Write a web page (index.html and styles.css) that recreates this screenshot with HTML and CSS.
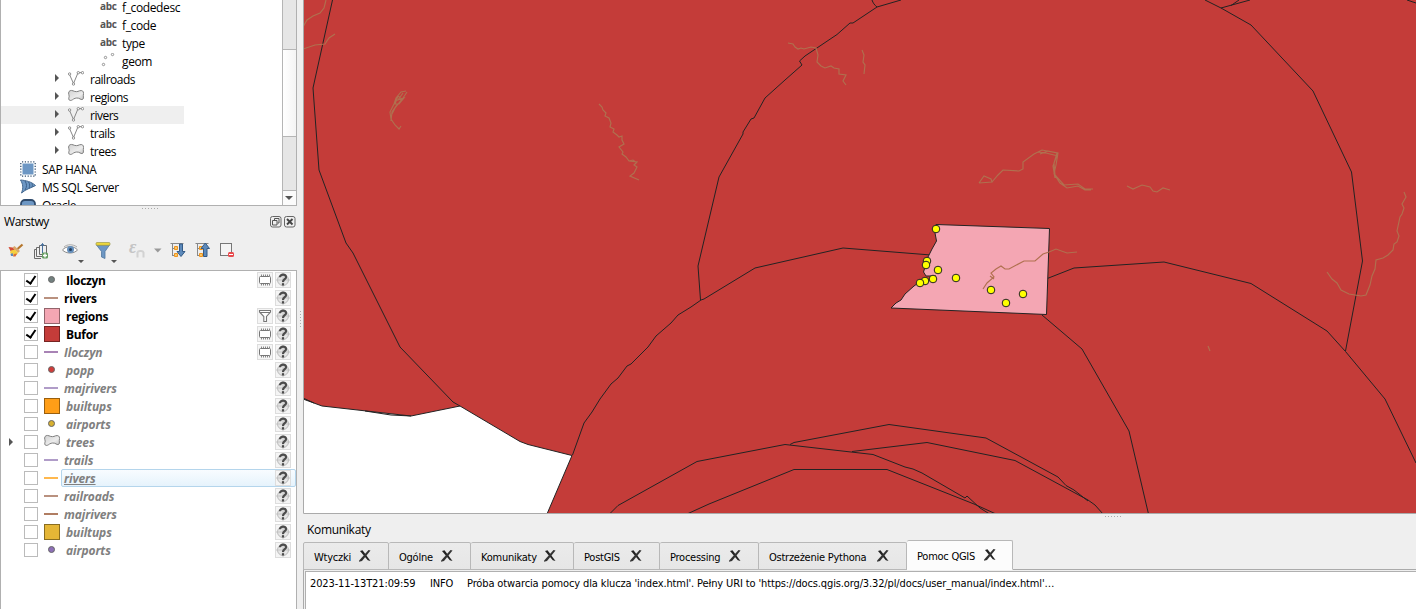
FILE: index.html
```html
<!DOCTYPE html>
<html lang="pl">
<head>
<meta charset="utf-8">
<title>QGIS</title>
<link rel="stylesheet" href="styles.css">
</head>
<body>
<svg class="defs" width="0" height="0">
  <defs>
    <linearGradient id="gray" x1="0" y1="0" x2="1" y2="1"><stop offset="0" stop-color="#d2d2d2"/><stop offset=".6" stop-color="#ececec"/><stop offset="1" stop-color="#c0c0c0"/></linearGradient>
    <symbol id="line" viewBox="0 0 16 16"><path d="M1.500 3.500 5.500 12.500 10 1.800 14.500 1.500" fill="none" stroke="#888"/><g fill="#fff" stroke="#777" stroke-width=".8"><circle cx="1.600" cy="3" r="1.200"/><circle cx="5.500" cy="13" r="1.200"/><circle cx="10.300" cy="1.700" r="1.200"/><circle cx="14.500" cy="1.700" r="1.200"/></g></symbol>
    <symbol id="poly" viewBox="0 0 16 16"><path d="M.6 4C.8 1.500 3 1 5 1.800 7.500 3 9.500 2.800 11.500 1.800 14 1 15.700 2 15.500 4.500 15.300 6 15.200 7.500 15.400 9 15.200 10.800 13.500 11 12 9.900 10 8.600 7.500 8.800 5.500 10 4 11.200 2.500 12 1.200 11 .3 9.800 1 8.500 1.200 7.200 1.200 6 .5 5.500.6 4Z" fill="url(#gray)" stroke="#808080"/></symbol>
    <symbol id="pts" viewBox="0 0 16 16"><g fill="#fff" stroke="#888" stroke-width=".9"><circle cx="3.500" cy="11.500" r="1.200"/><circle cx="5.500" cy="4.500" r="1.200"/><circle cx="12.500" cy="1.500" r="1.200"/></g></symbol>
    <symbol id="help" viewBox="0 0 16 16"><circle cx="8" cy="8" r="5.500" fill="#e6e6e6" stroke="#bbb"/><path d="M1 8H15M8 1V15" stroke="#c4c4c4"/><path d="M5 5.300C5 1.700 11 1.900 11 5.200 11 7.300 8 7.200 8 10" fill="none" stroke="#4c4c4c" stroke-width="2.200"/><rect x="6.900" y="11.200" width="2.200" height="2.300" fill="#4c4c4c"/></symbol>
    <symbol id="chip" viewBox="0 0 16 16"><rect x="2.500" y="4.500" width="11" height="7" rx="1" fill="#fff" stroke="#777"/><path d="M4.500 2.500V4M6.500 2.500V4M8.500 2.500V4M10.500 2.500V4M12.500 2.500V4M4.500 12V13.500M6.500 12V13.500M8.500 12V13.500M10.500 12V13.500M12.500 12V13.500" stroke="#888"/></symbol>
    <symbol id="filt" viewBox="0 0 16 16"><path d="M2.500 2.500H13.500V4L9.500 8.500V13.500H6.800V8.500L2.500 4ZM3 4.500H13" fill="#fff" stroke="#777" stroke-width="1.100"/></symbol>
    <symbol id="x" viewBox="0 0 14 14"><path d="M2 2 4.500 1.300 12.500 12 9.800 11.200Z" fill="#222"/><path d="M10.500 1 12.500 1.500 4 12 1 12.800 1.200 11.500Z" fill="#333"/></symbol>
  </defs>
</svg>
<div class="app">
  <aside class="side">
    <section class="browser">
      <div class="tree">
        <div class="node field"><b class="abc">abc</b><span>f_codedesc</span></div>
        <div class="node field"><b class="abc">abc</b><span>f_code</span></div>
        <div class="node field"><b class="abc">abc</b><span>type</span></div>
        <div class="node field"><svg class="ic"><use href="#pts"/></svg><span>geom</span></div>
        <div class="node table"><i class="arrow"></i><svg class="ic"><use href="#line"/></svg><span>railroads</span></div>
        <div class="node table"><i class="arrow"></i><svg class="ic"><use href="#poly"/></svg><span>regions</span></div>
        <div class="node table hover"><i class="arrow"></i><svg class="ic"><use href="#line"/></svg><span>rivers</span></div>
        <div class="node table"><i class="arrow"></i><svg class="ic"><use href="#line"/></svg><span>trails</span></div>
        <div class="node table"><i class="arrow"></i><svg class="ic"><use href="#poly"/></svg><span>trees</span></div>
        <div class="node root"><svg class="ic" viewBox="0 0 16 16"><rect x="2.500" y="2.500" width="11" height="11" fill="#6d97c4"/><path d="M2 .8H15M2 15.200H15M.8 2V15M15.200 2V15" fill="none" stroke="#34506e" stroke-width="1.300" stroke-dasharray="1.200 1.600"/></svg><span>SAP HANA</span></div>
        <div class="node root"><svg class="ic" viewBox="0 0 16 16"><path d="M.5 1C6 1.500 11 2.500 15.500 6.500 11 9 6 10 1.500 14 3.500 9 3 5 .5 1Z" fill="#6d97c4" stroke="#44688f"/><path d="M5 2C7 5 7 8 5 11M8.500 3C10 5 10 7 9 9.500M12 4.500C12.500 6 12.500 7 12 8" fill="none" stroke="#3b5f88"/></svg><span>MS SQL Server</span></div>
        <div class="node root"><svg class="ic" viewBox="0 0 16 16"><rect x="1" y="3" width="14" height="11" rx="4" fill="#6d97c4" stroke="#2e4a6c" stroke-width="1.800"/></svg><span>Oracle</span></div>
      </div>
      <div class="scroll"><div class="thumb"></div><div class="down"><i></i></div></div>
    </section>
    <div class="grip"></div>
    <header class="title"><span>Warstwy</span>
      <svg width="12" height="12" viewBox="0 0 12 12"><rect x=".5" y=".5" width="10.500" height="10.500" rx="2" fill="none" stroke="#666"/><path d="M4.500 4.500V2.500H9V7H7.500M2.500 4.500H7V9H2.500Z" fill="none" stroke="#555"/></svg>
      <svg width="12" height="12" viewBox="0 0 12 12"><rect x=".5" y=".5" width="10.500" height="10.500" rx="2" fill="none" stroke="#666"/><path d="M3 3 8.500 8.500M8.500 3 3 8.500" stroke="#444" stroke-width="1.900"/></svg>
    </header>
    <svg class="tools" width="297" height="36" viewBox="0 234 297 36">
      <path d="M17.500 249 22.500 244.500" stroke="#b5762c" stroke-width="2.200"/><path d="M14.500 246 20 251 18 253 12.500 247.500Z" fill="#d9a86a"/><path d="M8.500 247 12.500 247.500 15 250 11 252Z" fill="#d44b35"/><path d="M11 250.500 15 249.500 18 253 16.500 255 13.500 255.500 10 253Z" fill="#f4cf3e"/><path d="M10.500 254 12.500 253 13.500 256H11Z" fill="#5b87bd"/><path d="M14 254 17 253.500 15.500 256.500 13 256.500Z" fill="#dd6a38"/>
      <g fill="none" stroke="#6a6a6a"><path d="M39.500 245.500H46.500V254.500H39.500ZM39 247.500H36.500V256.500H43M36 249.500H34.500V258.500H41"/><path d="M42.500 253V243.500M40.500 246 42.500 243.500 44.500 246" stroke="#456f9d"/></g><rect x="42" y="252.500" width="6" height="6" rx="1.500" fill="#619a5d"/><path d="M43 255.500H47M45 253.500V257.500" stroke="#fff" stroke-width="1.400"/>
      <path d="M62.500 250C66 245.500 74 245.500 77.500 250 74 254 66 254 62.500 250Z" fill="#fff" stroke="#8a8a8a"/><path d="M64 247C67 244 73 244 77 247" fill="none" stroke="#aaa"/><circle cx="70.500" cy="249.500" r="3.500" fill="#638ebc"/><circle cx="70.500" cy="249.500" r="1.500" fill="#263f5d"/>
      <path d="M96.500 245H109.500L105 251.500V258.500L101.500 257V251.500Z" fill="#6d97c4" stroke="#50779f" stroke-width=".8"/><rect x="96" y="242.500" width="14" height="2.800" rx="1" fill="#eed83b" stroke="#9d994a" stroke-width=".7"/>
      <path d="M78 260H84L81 263ZM111 260H117L114 263Z" fill="#555"/><path d="M154 248.500H161.500L157.750 252.500Z" fill="#999"/>
      <text x="129" y="253" class="eps">ε</text><path d="M137.500 257.500V252.500Q138 251 140 251H141Q143 251 143.500 252.500V257.500" fill="none" stroke="#d2d2d2" stroke-width="2"/>
      <g id="tr"><path d="M170.500 243.500H183.500M172.500 244V256M172.500 248.500H175M172.500 255.500H175" fill="none" stroke="#888"/><path d="M174.500 246.500H177.500V249.500H174.500ZM174.500 253.500H177.500V256.500H174.500Z" fill="#fbc866" stroke="#ee9420"/></g>
      <use href="#tr" x="25"/>
      <path d="M179.500 244H182.500V251.500H185L181 256.500 177 251.500H179.500Z" fill="#5d8abb" stroke="#345b87"/>
      <path d="M203.500 256.500H207V248.500H209.500L205.300 243 201 248.500H203.500Z" fill="#5d8abb" stroke="#345b87"/>
      <rect x="220.500" y="243.500" width="11" height="12" fill="#f4f4f4" stroke="#777"/><rect x="228" y="252" width="6" height="5" rx="1.500" fill="#e84a4d"/><path d="M229 254.500H233" stroke="#fff"/>
    </svg>
    <section class="layers">
      <div class="row on"><i class="exp"></i><i class="chk"></i><i class="sym dot" style="--c:#72807f"></i><div class="lbl"><span>Iloczyn</span><svg><use href="#chip"/></svg><svg><use href="#help"/></svg></div></div>
      <div class="row on"><i class="exp"></i><i class="chk"></i><i class="sym ln" style="--c:#b9917f"></i><div class="lbl"><span>rivers</span><svg><use href="#help"/></svg></div></div>
      <div class="row on"><i class="exp"></i><i class="chk"></i><i class="sym sq" style="--c:#f4a6b3"></i><div class="lbl"><span>regions</span><svg><use href="#filt"/></svg><svg><use href="#help"/></svg></div></div>
      <div class="row on"><i class="exp"></i><i class="chk"></i><i class="sym sq" style="--c:#c43c39"></i><div class="lbl"><span>Bufor</span><svg><use href="#chip"/></svg><svg><use href="#help"/></svg></div></div>
      <div class="row"><i class="exp"></i><i class="chk"></i><i class="sym ln" style="--c:#a883b5"></i><div class="lbl"><span>Iloczyn</span><svg><use href="#chip"/></svg><svg><use href="#help"/></svg></div></div>
      <div class="row"><i class="exp"></i><i class="chk"></i><i class="sym dot" style="--c:#d03c39"></i><div class="lbl"><span>popp</span><svg><use href="#help"/></svg></div></div>
      <div class="row"><i class="exp"></i><i class="chk"></i><i class="sym ln" style="--c:#b09cc8"></i><div class="lbl"><span>majrivers</span><svg><use href="#help"/></svg></div></div>
      <div class="row"><i class="exp"></i><i class="chk"></i><i class="sym sq" style="--c:#ff9e17"></i><div class="lbl"><span>builtups</span><svg><use href="#help"/></svg></div></div>
      <div class="row"><i class="exp"></i><i class="chk"></i><i class="sym dot" style="--c:#d7b02f"></i><div class="lbl"><span>airports</span><svg><use href="#help"/></svg></div></div>
      <div class="row"><i class="exp arrow"></i><i class="chk"></i><svg class="sym"><use href="#poly"/></svg><div class="lbl"><span>trees</span><svg><use href="#help"/></svg></div></div>
      <div class="row"><i class="exp"></i><i class="chk"></i><i class="sym ln" style="--c:#b09cc8"></i><div class="lbl"><span>trails</span><svg><use href="#help"/></svg></div></div>
      <div class="row sel"><i class="exp"></i><i class="chk"></i><i class="sym ln" style="--c:#ffb84e"></i><div class="lbl"><span>rivers</span><svg><use href="#help"/></svg></div></div>
      <div class="row"><i class="exp"></i><i class="chk"></i><i class="sym ln" style="--c:#b9917f"></i><div class="lbl"><span>railroads</span><svg><use href="#help"/></svg></div></div>
      <div class="row"><i class="exp"></i><i class="chk"></i><i class="sym ln" style="--c:#b07d62"></i><div class="lbl"><span>majrivers</span><svg><use href="#help"/></svg></div></div>
      <div class="row"><i class="exp"></i><i class="chk"></i><i class="sym sq" style="--c:#e5b636"></i><div class="lbl"><span>builtups</span><svg><use href="#help"/></svg></div></div>
      <div class="row"><i class="exp"></i><i class="chk"></i><i class="sym dot" style="--c:#8d70b8"></i><div class="lbl"><span>airports</span><svg><use href="#help"/></svg></div></div>
    </section>
  </aside>
  <div class="vgrip"></div>
  <main class="main">
    <svg class="map" width="1113" height="514" viewBox="303 0 1113 514">
      <rect x="303" width="1113" height="514" fill="#c43c39"/>
      <path d="M303 399 322 406 411 416 460 406 520 441.500 528 444.500 572 455.500 547 514H303Z" fill="#fff"/>
      <g fill="none" stroke="#232323" stroke-width="1">
        <path d="M303 399 322 406 411 416 460 406 520 441.500 528 444.500 572 455.500 547 514M303 398 314 403M365 411 391 415 411 416"/>
        <path d="M332.500 0 313 88 319 170 346 243 353 253 400 347 453 402 460 406"/>
        <path d="M572.500 455 584 423 592 412 600 399 611 384 618 378 627 366 631 364 648 347 656 336 671 323 678 315 691 307 701 300 704 299 755 268 843 248 931 255"/>
        <path d="M700.500 300 698 266 719 177 743 134 743 132 751 119 754 118 765 98 785 80 802 65 799.500 61 805 56 837 34.500 850 23 853 23 877 7 901 0M872 0C873 3 874.500 5 877 7"/>
        <path d="M1205 0 1221 8 1251 25 1313 91 1351.500 172 1362.500 261 1345.500 351M1221 8 1250 0M1231 5.500 1239 0M1407 0 1416 3"/>
        <path d="M1046 279 1074 268 1164 262 1251 283.500 1327 331 1345.500 351.500 1385 399 1416 463"/>
        <path d="M1042 315 1082 349 1129 431 1148.500 514"/>
        <path d="M609.500 514 618 505.500 697 461.500 785 444.500 873 454.500 905 467 913 469 922 473 965 498 967 496 980 508 996 518 1001 514"/>
        <path d="M687 514 709 504 794 469.500H887L974 504 996 514"/>
        <path d="M790 444.500 794 442.500 889 424.500 986 438 1058 477 1066 485.500 1074 490 1088 501M852 451.500 927 442.500 1015 460.500 1088 500 1095 505 1103 514"/>
      </g>
      <path d="M936 224.500 1049.500 228.500 1046.500 314.500 891 308 896 303 901 300 905 294 914 286 921 281 933 279 936 276 926 276 923.500 272 926 264 928 257 932 249 936.500 241 935 233Z" fill="#f4a6b3" stroke="#232323"/>
      <g fill="none" stroke="#b0704f" stroke-width="1.150">
        <path d="M303 27 307 20 313 16 320 13 324 8 326 0M303 49 315 45 325 44 329 38 335 34"/>
        <path d="M406 91 401 92 396 98 394 104 390 112 391 119 395 125 399 129 401 126M407 92 401 101 396 106 392 112 391 121M403 93 398 100 404 98 399 104 395 104 398 96 402 99 395 108 391 116"/>
        <path d="M599 104 602 107 603 110 606 113 605 116 609 118 611 123 610 127 614 129 613 132 617 135 619 137 622 136 622 140 624 144 619 147 623 152 622 154 626 157 629 161 637 162 634 165 637 167 634 173 630 176 639 180M629 161 633 160 637 163"/>
        <path d="M788 43 793 44 795 47 798 49 801 48 804 49 811 47 816 48 818 55 817 62 821 66 825 68 831 66 834 68 839 69 839 74 846 75 843 81 846 85M862 50 864 55 863 62 865 65 864 74"/>
        <path d="M979 183 984 176 991 179 992 182 979 183M992 182 998 175 1003 170 1019 171 1023 169 1023 162 1034 154 1042 150 1057 153 1054 163 1055 175 1064 185 1078 184 1085 189 1093 189M1038 152 1046 153 1058 156M1040 154 1048 151 1058 153 1056 165 1054 174 1060 183 1067 188 1078 186 1085 190 1091 190M1057 155 1053 166 1055 178"/>
        <path d="M1127 186 1133 189 1142 185 1150 187 1153 191 1157 192 1163 188 1170 190M1404 192 1406 197 1402 204 1404 208 1402 214 1400 217 1397 231 1399 236 1397 242 1394 244 1393 250 1388 255 1383 258 1376 260 1375 269 1372 276 1370 285 1366 295 1361 296 1349 294 1341 290 1337 283 1332 279 1327 272M1208 346 1210 351"/>
        <path d="M983 289 987 283 994 277 991 273 996 269 1001 266 1005 269 1009 269 1024 261 1035 261 1043 254 1049 252 1056 249 1067 253 1077 252M990 276 994 279"/>
      </g>
      <g fill="#ff0" stroke="#232323" stroke-width="1"><circle cx="936" cy="229" r="3.800"/><circle cx="927" cy="261" r="3.800"/><circle cx="926" cy="265" r="3.800"/><circle cx="938" cy="270" r="3.800"/><circle cx="925" cy="281" r="3.800"/><circle cx="933" cy="279" r="3.800"/><circle cx="920" cy="283" r="3.800"/><circle cx="956" cy="278" r="3.800"/><circle cx="991" cy="290" r="3.800"/><circle cx="1023" cy="294" r="3.800"/><circle cx="1006" cy="303" r="3.800"/></g>
      <path d="M303.500 0V513.500H1416" fill="none" stroke="#aaa"/>
    </svg>
    <div class="grip low"></div>
    <header class="msgtitle">Komunikaty</header>
    <nav class="tabs">
      <div class="tab t1"><span>Wtyczki</span><svg><use href="#x"/></svg></div>
      <div class="tab t2"><span>Ogólne</span><svg><use href="#x"/></svg></div>
      <div class="tab t3"><span>Komunikaty</span><svg><use href="#x"/></svg></div>
      <div class="tab t4"><span>PostGIS</span><svg><use href="#x"/></svg></div>
      <div class="tab t5"><span>Processing</span><svg><use href="#x"/></svg></div>
      <div class="tab t6"><span>Ostrzeżenie Pythona</span><svg><use href="#x"/></svg></div>
      <div class="tab t7 cur"><span>Pomoc QGIS</span><svg><use href="#x"/></svg></div>
    </nav>
    <section class="log"><p><span class="time">2023-11-13T21:09:59</span><span class="lvl">INFO</span><span class="txt">Próba otwarcia pomocy dla klucza 'index.html'. Pełny URI to 'https://docs.qgis.org/3.32/pl/docs/user_manual/index.html'…</span></p></section>
  </main>
</div>
</body>
</html>
```
FILE: styles.css
```css
*, ::before { box-sizing: border-box; }
body { margin: 0; width: 1416px; height: 609px; overflow: hidden; background: #efefef; color: #000; font: 12px/18px "Open Sans", "Noto Sans", sans-serif; }
.defs { position: absolute; }
.app { display: flex; height: 609px; }
.side { width: 297px; flex: none; display: flex; flex-direction: column; }
.browser { height: 206px; flex: none; display: flex; background: #fff; border: solid #b0b0b0; border-width: 0 1px 1px; overflow: hidden; }
.tree { flex: 1; margin-top: -2px; }
.node { display: flex; align-items: center; height: 18px; letter-spacing: -.38px; white-space: nowrap; }
.node span { line-height: 14px; padding-top: 1px; }
.field { padding-left: 99px; }
.field .ic { margin-right: 7px; }
.field .ic + span { margin-left: -1px; }
.abc { width: 22px; color: #555; font-size: 10px; line-height: 12px; letter-spacing: -.3px; padding-bottom: 3px; }
.table { padding-left: 54px; width: 183px; letter-spacing: -.5px; }
.table .ic { margin: 0 6px 0 8px; }
.root { padding-left: 19px; }
.root .ic { margin-right: 6px; }
.ic { width: 16px; height: 16px; flex: none; margin-top: -1px; }
.hover { background: #efefef; }
.arrow::before { content: ""; display: block; width: 4px; border: solid transparent; border-width: 4px 0 4px 4px; border-left-color: #555; }
.node .arrow { width: 5px; padding-bottom: 2px; }
.scroll { width: 14px; margin-left: auto; background: #e6e6e6; border-left: 1px solid #b5b5b5; display: flex; flex-direction: column; }
.thumb { height: 88px; margin-top: 49px; background: linear-gradient(90deg, #fff, #f4f4f4); border: solid #b5b5b5; border-width: 1px 0; }
.down { margin-top: auto; height: 15px; border-top: 1px solid #b5b5b5; background: #fbfbfb; display: grid; place-items: center; }
.down i { border: solid transparent; border-width: 4px 4px 0; border-top-color: #555; margin-right: 1px; }
.grip { width: 17px; height: 1px; margin: 2px 0 0 142px; background: repeating-linear-gradient(90deg, #aaa 0 1px, transparent 1px 3px); flex: none; }
.title { display: flex; align-items: center; height: 25px; padding: 0 1px 0 4px; gap: 2px; letter-spacing: -.45px; }
.title span { flex: 1; }
.tools { flex: none; }
.eps { font: italic bold 18px "Liberation Serif", serif; fill: #c4c4c4; }
.layers { flex: 1; background: #fff; border: 1px solid #b0b0b0; border-width: 1px 1px 0; }
.row { display: flex; align-items: center; height: 18px; padding-left: 23px; font-weight: bold; font-style: italic; color: #808080; }
.exp { width: 0; }
.exp.arrow { width: 15px; margin-left: -15px; }
.chk { width: 14px; height: 14px; border: 1px solid #bbb; background: #fff; margin-right: 6px; }
.on { color: #000; font-style: normal; }
.on .chk::before { content: ""; display: block; width: 6px; height: 10px; margin: 0 0 0 3px; border: solid #000; border-width: 0 2px 2px 0; transform: rotate(34deg); }
.sym { width: 16px; height: 16px; flex: none; display: grid; place-items: center; }
.sq { background: var(--c); border: 1px solid color-mix(in srgb, var(--c) 60%, #000); }
.dot::before { content: ""; width: 7px; height: 7px; margin: 0 1px 1px 0; border-radius: 50%; background: var(--c); border: 1px solid #666; }
.ln::before { content: ""; width: 14px; height: 2px; margin-right: 2px; background: var(--c); }
.lbl { flex: 1; height: 18px; margin-left: 1px; padding: 0 5px 0 4px; display: flex; align-items: center; gap: 2px; border: 1px solid transparent; border-right-width: 0; letter-spacing: -.1px; }
.on .lbl { letter-spacing: -.3px; }
.ln + .lbl { padding-left: 2px; }
.lbl span { flex: 1; padding-top: 2px; }
.lbl svg { width: 16px; height: 16px; box-shadow: inset 0 0 0 1px #ddd; background: #f5f5f5; }
.sel .lbl { border: 1px solid #b4d5ec; border-radius: 2px; background: linear-gradient(#f8fcff, #e6f3fc); padding-right: 4px; }
.sel span { text-decoration: underline; }
.vgrip { width: 6px; flex: none; background: repeating-linear-gradient(#aaa 0 1px, transparent 1px 3px) 3px 311px / 1px 17px no-repeat; }
.main { flex: 1; display: flex; flex-direction: column; min-width: 0; }
.map { display: block; flex: none; }
.low { margin: 2px 0 0 802px; }
.msgtitle { height: 23px; padding: 4px 0 0 4px; letter-spacing: -.3px; }
.tabs { display: flex; align-items: flex-end; height: 30px; font: 11px/14px "DejaVu Sans Condensed", "DejaVu Sans", sans-serif; letter-spacing: -.25px; box-shadow: inset 0 -1px #aaa; flex: none; }
.tab { height: 28px; display: flex; justify-content: space-between; align-items: center; padding: 3px 16px 0 10px; border: 1px solid #b8b8b8; border-left-width: 0; background: linear-gradient(#ebebeb, #e6e6e6); border-radius: 2px 2px 0 0; white-space: nowrap; }
.tab svg { width: 14px; height: 14px; margin-top: -3px; flex: none; }
.t1 { width: 86px; border-left-width: 1px; }
.t2 { width: 82px; }
.t3 { width: 103px; }
.t4 { width: 86px; }
.t5 { width: 99px; }
.t6 { width: 148px; }
.cur { width: 106px; height: 30px; background: #fcfcfc; border-bottom-color: #fcfcfc; padding-right: 15px; }
.log { flex: 1; border: solid #aaa; border-width: 0 0 0 1px; padding: 1px 0 0 1px; }
.log p { margin: 0; height: 100%; background: #fff; border: solid #b0b0b0; border-width: 1px 0 0 1px; padding: 5px 0 0 4px; display: flex; white-space: nowrap; font: 11px/14px "DejaVu Sans Condensed", "DejaVu Sans", sans-serif; letter-spacing: -.13px; }
.time { width: 120px; }
.lvl { width: 37px; }
```
